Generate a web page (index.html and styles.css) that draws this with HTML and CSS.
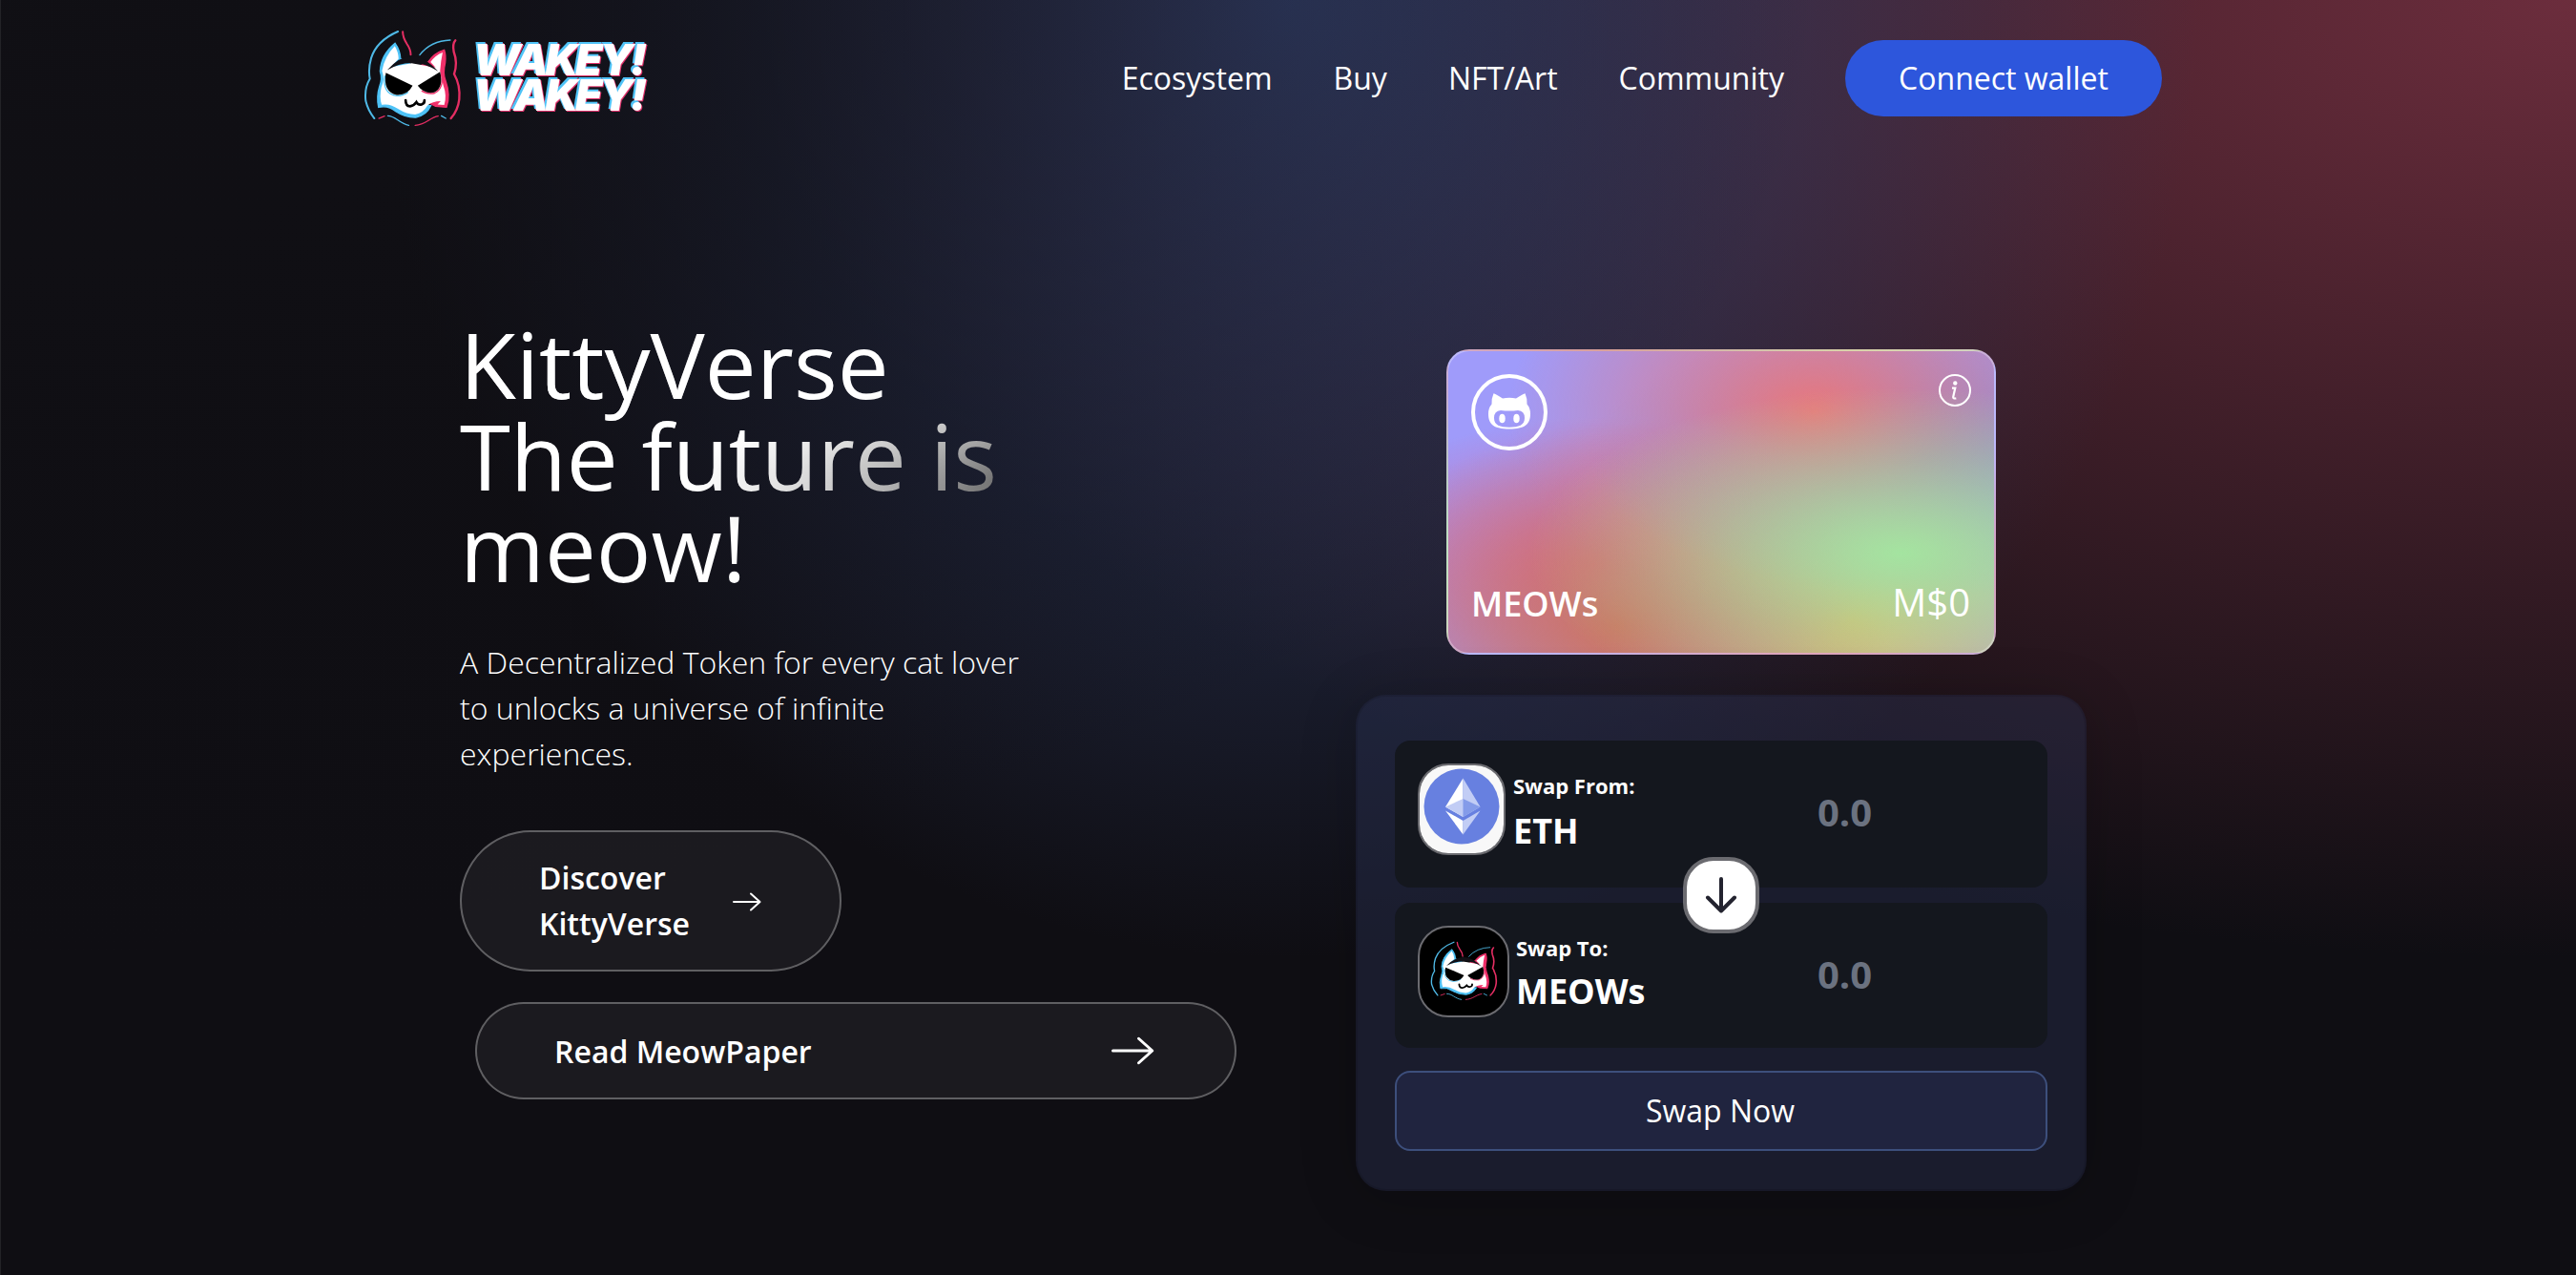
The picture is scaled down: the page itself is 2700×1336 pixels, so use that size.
FILE: index.html
```html
<!DOCTYPE html>
<html lang="en">
<head>
<meta charset="utf-8">
<title>Wakey! Wakey! KittyVerse</title>
<link rel="stylesheet" href="styles.css">
</head>
<body>
<svg class="defs" width="0" height="0" aria-hidden="true">
  <symbol id="cat" viewBox="64 60 308 310" preserveAspectRatio="none">
    <g fill="none" stroke-linecap="round">
      <g stroke="#4fb9e6">
        <path stroke-width="6" d="M172 66Q105 95 88 150Q78 185 84 215Q66 245 71 285Q78 315 98 340"/>
        <path stroke-width="4" d="M240 140Q275 95 336 93"/>
        <path stroke-width="4" d="M140 332C165 332 175 356 206 362M308 332L322 340"/>
      </g>
      <g stroke="#e52e63">
        <path stroke-width="6" d="M187 67Q187 85 200 105Q212 122 212 139"/>
        <path stroke-width="7" d="M352 94Q342 105 347 130Q360 165 348 200Q368 235 364 280Q360 315 338 340"/>
        <path stroke-width="4" d="M112 340L130 333M226 362C260 360 270 338 298 333"/>
      </g>
    </g>
    <g stroke-width="4">
      <path fill="#4fc3f7" stroke="#4fc3f7" d="M163 103Q118 140 116 192Q124 215 114 240Q104 272 111 305Q142 298 165 318Q195 338 228 337Q262 330 275 300H230V180L180 152Q179 125 163 103Z"/>
      <path fill="#f0306a" stroke="#f0306a" d="M317 124Q284 134 267 162L230 180V270L290 302L324 305Q338 268 321 220Q312 200 320 165Q323 140 317 124Z"/>
    </g>
    <path fill="#fff" d="M162 112Q130 145 122 190Q132 215 120 242Q113 272 121 297Q148 292 172 310Q200 328 226 328Q252 322 264 300Q280 286 306 286L296 296L317 298Q326 268 314 235L304 190Q306 160 312 132Q290 140 274 162L290 180L215 166L150 178L174 152Q173 130 162 112Z"/>
    <path fill="#111016" d="M138 188Q215 98 298 192Q258 164 215 165Q172 166 138 188Z"/>
    <path fill="none" stroke="#4fc3f7" stroke-width="4" d="M131 205Q122 262 168 269Q190 269 204 257"/>
    <path fill="none" stroke="#f0306a" stroke-width="4" d="M308 198Q318 244 286 261Q262 264 246 253"/>
    <path fill="#000" d="M134 196L218 237Q202 268 168 266Q124 256 134 196ZM304 193L234 237Q254 264 286 258Q316 242 304 193Z"/>
    <path fill="none" stroke="#000" stroke-width="8" stroke-linecap="round" d="M196 283Q196 302 210 302Q223 300 230 289Q236 299 246 296Q256 293 255 283"/>
  </symbol>
</svg>

<header class="header">
  <a class="logo" href="#">
    <svg class="logo-cat"><use href="#cat"/></svg>
    <svg class="logo-type" viewBox="0 0 188 84">
      <text x="1" y="38.500" textLength="182">WAKEY!</text>
      <text x="1" y="75.500" textLength="182">WAKEY!</text>
    </svg>
  </a>
  <nav class="nav">
    <a href="#">Ecosystem</a>
    <a href="#">Buy</a>
    <a href="#">NFT/Art</a>
    <a href="#">Community</a>
    <button class="connect">Connect wallet</button>
  </nav>
</header>

<main class="hero">
  <section class="intro">
    <h1 class="title">KittyVerse<br>The future is meow!</h1>
    <p class="lead">A Decentralized Token for every cat lover to unlocks a universe of infinite experiences.</p>
    <a class="pill pill-small" href="#"><span>Discover<br>KittyVerse</span>
      <svg class="arrow" viewBox="0 0 30 20"><path d="M1 10H28M19 1.5L28.5 10L19 18.5"/></svg>
    </a>
    <a class="pill pill-wide" href="#"><span>Read MeowPaper</span>
      <svg class="arrow" viewBox="0 0 30 20"><path d="M1 10H28M19 1.5L28.5 10L19 18.5"/></svg>
    </a>
  </section>

  <section class="wallet">
    <div class="card">
      <div class="card-row">
        <span class="badge">
          <svg width="44" height="38" viewBox="0 0 44 38"><path fill="#fff" fill-rule="evenodd" d="M5.500 0.300Q9 1.500 15 5.500Q22 4 29 5.500Q35 1.500 38.500 .3Q41 6 40.500 11.500Q44 15.500 44 21.500C44 33 38 37.500 22 37.500S0 33 0 21.500Q0 15.500 3.500 11.500Q3 6 5.500 .3ZM13 18Q6 18.500 6 26C6 33.500 12 35.700 22 35.700S38 33.500 38 26Q38 18.500 31 18Q22 19 13 18Z"/><ellipse cx="14.500" cy="26.500" rx="3.200" ry="4.700" fill="#fff"/><ellipse cx="29.500" cy="26.500" rx="3.200" ry="4.700" fill="#fff"/></svg>
        </span>
        <svg class="info" width="34" height="34" viewBox="0 0 34 34"><circle cx="17" cy="17" r="16" fill="none" stroke="#fff" stroke-width="2"/><circle cx="17.300" cy="9.500" r="2.200" fill="#fff"/><path d="M14 14.600H17.300L15.200 24Q14.900 26 18.300 25.300" fill="none" stroke="#fff" stroke-width="2.200"/></svg>
      </div>
      <div class="card-row card-foot"><span class="token">MEOWs</span><span class="amount">M$0</span></div>
    </div>

    <div class="swap">
      <div class="field field-from">
        <svg class="coin coin-eth" viewBox="0 0 88 92"><rect width="88" height="92" fill="#f8f8f8"/><circle cx="44" cy="43" r="39.500" fill="#6780e0"/><path fill="#fff" d="M45.500 13.500V54L27 43.500Z"/><path fill="#c2cdf5" d="M45.500 13.500L63.500 43.500L45.500 54Z"/><path fill="#c2cdf5" d="M45.500 35L27 43.500L45.500 54Z"/><path fill="#849be9" d="M45.500 35L63.500 43.500L45.500 54Z"/><path fill="#fff" d="M27 47.500L45.500 58V72.500Z"/><path fill="#c2cdf5" d="M63.500 47.500L45.500 58V72.500Z"/></svg>
        <div class="label"><small>Swap From:</small><strong>ETH</strong></div>
        <span class="value">0.0</span>
      </div>
      <div class="field field-to">
        <div class="coin coin-meow"><svg><use href="#cat"/></svg></div>
        <div class="label"><small>Swap To:</small><strong>MEOWs</strong></div>
        <span class="value">0.0</span>
        <button class="flip" aria-label="Flip"><svg width="34" height="38" viewBox="0 0 34 38"><path d="M17 2V35M3 21.500L17 35.500L31 21.500"/></svg></button>
      </div>
      <button class="swap-now">Swap Now</button>
    </div>
  </section>
</main>
</body>
</html>
```
FILE: styles.css
```css
* { box-sizing: border-box; }

html { background: #0f0e13; }
body {
  margin: 0;
  min-height: 1336px;
  font: 32px/48px "Open Sans", sans-serif;
  color: #fff;
  background-color: #0f0e13;
  background-image:
    linear-gradient(90deg, #232327 1px, transparent 1px),
    radial-gradient(at 0% 0%, hsl(250 14% 7%) 0, transparent 50%),
    radial-gradient(at 50% 0%, hsl(226 36% 30%) 0, transparent 50%),
    radial-gradient(at 100% 0%, hsl(345 41% 30%) 0, transparent 50%);
  background-size: 100% 1420px;
}

.defs { position: absolute; }
a { color: inherit; text-decoration: none; }
button { font: inherit; color: inherit; }

.header {
  display: flex;
  justify-content: space-between;
  align-items: center;
  height: 164px;
  padding: 0 434px 0 381px;
}
.logo { display: flex; align-items: center; gap: 11px; }
.logo-cat { width: 103px; height: 103px; }
.logo-type {
  width: 188px;
  height: 84px;
  overflow: visible;
  font: italic 900 46px Inter, sans-serif;
  fill: #fff;
  filter: drop-shadow(-1.500px -1.500px 0 #4fc3f7) drop-shadow(1.500px 1.500px 0 #e0306a);
}

.nav { display: flex; align-items: center; gap: 64px; }
.connect {
  width: 332px;
  height: 80px;
  padding: 0;
  border: 0;
  border-radius: 40px;
  background: #2d56dc;
}

.hero { display: flex; padding-left: 482px; }
.intro { width: 830px; padding-top: 161px; }
.title {
  margin: 0;
  padding: 8px 0;
  font-size: 96px;
  font-weight: 400;
  line-height: 96px;
  background-color: #fff;
  background-image:
    radial-gradient(at 4% 36%, #fff 0, transparent 53%),
    radial-gradient(at 100% 60%, #000 0, transparent 50%);
  -webkit-background-clip: text;
  background-clip: text;
  color: transparent;
}
.lead { width: 622px; margin: 41px 0 56px; font-weight: 300; }

.pill {
  display: flex;
  align-items: center;
  justify-content: space-between;
  padding: 0 82px 0 81px;
  border: 2px solid rgb(255 255 255 / .3);
  border-radius: 80px;
  background: rgb(255 255 255 / .05);
  font-weight: 600;
}
.pill-small { width: 400px; height: 148px; }
.pill-wide { width: 798px; height: 102px; margin: 32px 16px 0; padding: 1px 84px 0 81px; }
.arrow { width: 30px; height: 20px; margin-top: 1px; fill: none; stroke: #fff; stroke-width: 2; stroke-linecap: round; stroke-linejoin: round; }
.pill-wide .arrow { width: 45px; height: 30px; margin-top: -1px; }

.wallet { display: flex; flex-direction: column; align-items: center; width: 766px; margin: 202px 0 0 109px; }
.card {
  display: flex;
  flex-direction: column;
  justify-content: space-between;
  width: 576px;
  height: 320px;
  padding: 24px 24px 23px;
  border: 2px solid rgb(255 255 255 / .3);
  border-radius: 24px;
  background-color: #9f9bfa;
  background-image:
    radial-gradient(at 83% 67%, rgb(164 228 160) 0, transparent 58%),
    radial-gradient(at 67% 20%, hsl(358 72% 69%) 0, transparent 59%),
    radial-gradient(at 88% 35%, hsl(222 70% 66%) 0, transparent 50%),
    radial-gradient(at 31% 91%, hsl(11 50% 59%) 0, transparent 52%),
    radial-gradient(at 27% 71%, hsl(338 66% 63%) 0, transparent 49%),
    radial-gradient(at 74% 89%, hsl(33 82% 65%) 0, transparent 51%),
    radial-gradient(at 53% 75%, hsl(172 70% 68%) 0, transparent 45%);
}
.card-row { display: flex; justify-content: space-between; align-items: flex-start; }
.card-foot { align-items: baseline; padding-right: 1px; }
.badge { display: flex; align-items: center; justify-content: center; width: 80px; height: 80px; padding-bottom: 2px; border: 4px solid #fff; border-radius: 50%; }
.token { font-size: 36px; font-weight: 600; line-height: 56px; }
.amount { font-size: 40px; font-weight: 400; line-height: 56px; }

.swap {
  width: 766px;
  height: 520px;
  margin-top: 42px;
  padding: 46px 39px;
  border: 2px solid rgb(0 0 0 / .1);
  border-radius: 32px;
  background: rgb(42 49 86 / .4);
  box-shadow: 0 8px 60px rgb(0 0 0 / .2);
}
.field { position: relative; display: flex; align-items: flex-start; padding: 24px; border-radius: 16px; background: #14171e; }
.field-from { height: 154px; }
.field-to { height: 152px; margin-top: 16px; }
.coin { flex: none; height: 96px; border: 2px solid #6b6b70; border-radius: 32px; }
.coin-eth { width: 92px; margin-right: 8px; }
.coin-meow { display: flex; width: 96px; padding: 14px 0 0 11px; margin-right: 7px; background: #000; }
.coin-meow svg { width: 71px; height: 63px; }
.label { display: flex; flex-direction: column; width: 319px; font-weight: 600; }
.label small { font-size: 22px; line-height: 32px; padding-top: 7px; font-weight: 700; }
.label strong { font-size: 36px; line-height: 48px; padding-top: 8px; font-weight: 700; }
.field-to .label { width: 316px; }
.field-to strong { padding-top: 6px; }
.value { margin-top: 26px; font-size: 40px; font-weight: 700; line-height: 50px; color: #6b7280; }
.flip {
  position: absolute;
  left: 302px;
  top: -48px;
  display: flex;
  align-items: center;
  justify-content: center;
  width: 80px;
  height: 80px;
  padding: 0;
  border: 4px solid #6b6b70;
  border-radius: 32px;
  background: #fff;
}
.flip svg { fill: none; stroke: #23232f; stroke-width: 4; stroke-linecap: round; stroke-linejoin: round; }
.swap-now { width: 100%; height: 84px; margin-top: 24px; padding: 0 2px 0 0; border: 2px solid #3d4f7c; border-radius: 16px; background: #20243f; }
```
